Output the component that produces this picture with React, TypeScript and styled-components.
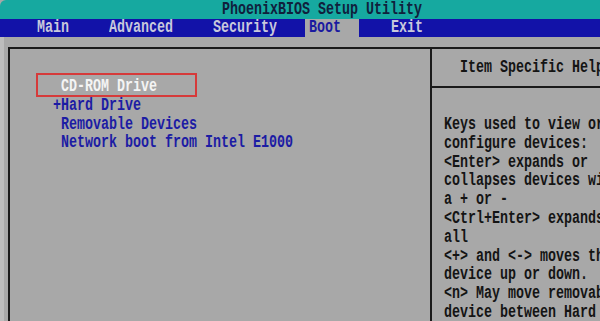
import React from 'react';
import styled, { createGlobalStyle } from 'styled-components';

const GlobalStyle = createGlobalStyle`
  html, body {
    margin: 0;
    padding: 0;
    background: #a8a8a8;
    overflow: hidden;
  }
`;

const menu = ['Main', 'Advanced', 'Security', 'Boot', 'Exit'];
const activeMenu = 'Boot';

const devices = [
  { label: 'CD-ROM Drive', selected: true, prefix: ' ' },
  { label: 'Hard Drive', selected: false, prefix: '+' },
  { label: 'Removable Devices', selected: false, prefix: ' ' },
  { label: 'Network boot from Intel E1000', selected: false, prefix: ' ' },
];

const helpLines = [
  'Keys used to view or',
  'configure devices:',
  '<Enter> expands or',
  'collapses devices with',
  'a + or -',
  '<Ctrl+Enter> expands',
  'all',
  '<+> and <-> moves the',
  'device up or down.',
  '<n> May move removable',
  'device between Hard',
];

const App: React.FC = () => {
  return (
    <>
      <GlobalStyle />
      <Screen>
        <TitleBar>
          <Glyphs>PhoenixBIOS Setup Utility</Glyphs>
        </TitleBar>
        <MenuBar>
          {menu.map((m) => (
            <MenuItem key={m} $active={m === activeMenu}>
              <Glyphs>{m}</Glyphs>
            </MenuItem>
          ))}
        </MenuBar>
        <Body>
          <Frame>
            <BootPanel>
              <Highlight />
              {devices.map((d) => (
                <DeviceRow key={d.label} $selected={d.selected}>
                  <Glyphs>{d.prefix + d.label}</Glyphs>
                </DeviceRow>
              ))}
            </BootPanel>
            <HelpPanel>
              <HelpHeader>
                <Glyphs>Item Specific Help</Glyphs>
              </HelpHeader>
              <HelpText>
                {helpLines.map((l, i) => (
                  <HelpLine key={i}>
                    <Glyphs>{l}</Glyphs>
                  </HelpLine>
                ))}
              </HelpText>
            </HelpPanel>
          </Frame>
        </Body>
      </Screen>
    </>
  );
};

const Screen = styled.div`
  width: 600px;
  height: 321px;
  overflow: hidden;
  display: flex;
  flex-direction: column;
  font-family: 'Liberation Mono', 'DejaVu Sans Mono', monospace;
  font-size: 13.33px;
  font-weight: bold;
  white-space: pre;
`;

// VGA text is tall and narrow, so stretch the mono glyphs vertically
const Glyphs = styled.span`
  display: inline-block;
  transform: scaleY(1.35);
`;

const TitleBar = styled.div`
  height: 19px;
  line-height: 19px;
  background: #16a9a0;
  color: #10203c;
  padding-left: 222px;
  border-top-left-radius: 6px;
`;

const MenuBar = styled.div`
  height: 18px;
  line-height: 18px;
  background: #1212a8;
  display: flex;
  gap: 24px;
  padding-left: 29px;
`;

const MenuItem = styled.div<{ $active: boolean }>`
  padding: ${(p) => (p.$active ? '0 18px 0 4px' : '0 8px')};
  margin-left: ${(p) => (p.$active ? '-4px' : '0')};
  background: ${(p) => (p.$active ? '#a8a8a8' : 'transparent')};
  color: ${(p) => (p.$active ? '#1a1aa0' : '#c8c8dc')};
`;

const Body = styled.div`
  flex: 1;
  background: #a8a8a8;
  border-left: 4px solid #bdbdbd;
  padding: 10px 0 0 4px;
  display: flex;
  min-height: 0;
`;

const Frame = styled.div`
  flex: 1;
  display: flex;
  border-top: 2px solid #1a1a1a;
  border-left: 2px solid #1a1a1a;
`;

const BootPanel = styled.div`
  position: relative;
  width: 422px;
  flex: none;
  border-right: 2px solid #1a1a1a;
  padding: 29px 0 0 43px;
  box-sizing: border-box;
`;

const Highlight = styled.div`
  position: absolute;
  left: 26px;
  top: 24px;
  width: 157px;
  height: 20px;
  border: 2px solid #d63a3a;
`;

const DeviceRow = styled.div<{ $selected: boolean }>`
  height: 18.8px;
  line-height: 18.8px;
  color: ${(p) => (p.$selected ? '#f4f4f4' : '#1c1ca4')};
`;

const HelpPanel = styled.div`
  flex: 1;
  display: flex;
  flex-direction: column;
`;

const HelpHeader = styled.div`
  height: 37px;
  line-height: 37px;
  padding-left: 28px;
  border-bottom: 2px solid #1a1a1a;
  color: #141414;
  flex: none;
`;

const HelpText = styled.div`
  padding: 28px 0 0 12px;
  color: #141414;
`;

const HelpLine = styled.div`
  height: 18.8px;
  line-height: 18.8px;
`;

export default App;
